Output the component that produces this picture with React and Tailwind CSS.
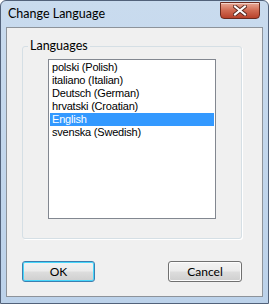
import React from "react";

const items = [
  "polski (Polish)",
  "italiano (Italian)",
  "Deutsch (German)",
  "hrvatski (Croatian)",
  "English",
  "svenska (Swedish)",
];

const ui = { fontFamily: 'Lato, "Noto Sans", sans-serif' };
const list = { fontFamily: '"Liberation Sans", Arial, sans-serif' };

function CloseButton() {
  return (
    <div className="ml-auto mr-[8px] mt-px w-[40px] h-[17px] rounded-b-[4px] border border-[#6b2a1e] bg-gradient-to-b from-[#e8a996] via-[#d06a52] to-[#b8412a] flex items-center justify-center shadow-[inset_0_1px_0_rgba(255,255,255,0.5)]">
      <svg width="14" height="11" viewBox="0 0 14 11">
        <path d="M2 1.5 L12 9.5 M12 1.5 L2 9.5" stroke="#5a2a22" strokeWidth="4" strokeLinecap="square" />
        <path d="M2 1.5 L12 9.5 M12 1.5 L2 9.5" stroke="#ffffff" strokeWidth="2" strokeLinecap="square" />
      </svg>
    </div>
  );
}

function Button({ children, def }) {
  return (
    <div
      className={
        "h-[21px] rounded-[3px] border flex items-center justify-center text-[12px] text-black bg-[linear-gradient(to_bottom,#f3f3f3_0%,#ebebeb_48%,#dddddd_52%,#cfcfcf_100%)] " +
        (def
          ? "border-[#3c7fb1] shadow-[inset_0_0_0_1px_#48d7fb]"
          : "border-[#707070] shadow-[inset_0_0_0_1px_#fcfcfc]")
      }
      style={ui}
    >
      {children}
    </div>
  );
}

export default function App() {
  return (
    <div className="w-[269px] h-[304px] flex flex-col rounded-t-[6px] border border-[#52627a] bg-gradient-to-b from-[#c9dbee] to-[#bcd2ea]">
      <div className="h-[26px] flex items-start shrink-0">
        <div className="pl-[7px] pt-[5px] text-[12.5px] leading-[16px] text-black" style={ui}>
          Change Language
        </div>
        <CloseButton />
      </div>
      <div className="mx-[5px] mb-[6px] flex-1 border border-[#8d939a] bg-[#f0f0f0] flex flex-col">
        <div className="relative ml-[15px] mt-[18px] w-[220px] h-[193px] rounded-[3px] border border-[#d5dfe5] shadow-[1px_1px_0_#ffffff] pt-[12px] pl-[25px]">
          <div
            className="absolute left-[5px] top-[-9px] px-[2px] bg-[#f0f0f0] text-[12.5px] leading-[16px] text-black"
            style={ui}
          >
            Languages
          </div>
          <div className="w-[168px] h-[160px] border border-[#828790] bg-white p-px flex flex-col">
            {items.map((t) => (
              <div
                key={t}
                className={
                  "h-[13px] pl-[2px] text-[11px] leading-[13px] tracking-[-0.2px] whitespace-nowrap " +
                  (t === "English" ? "bg-[#3399ff] text-white" : "text-black")
                }
                style={list}
              >
                {t}
              </div>
            ))}
          </div>
        </div>
        <div className="flex ml-[15px] mt-[22px] w-[220px] justify-between">
          <div className="w-[73px]">
            <Button def>OK</Button>
          </div>
          <div className="w-[74px]">
            <Button>Cancel</Button>
          </div>
        </div>
      </div>
    </div>
  );
}
